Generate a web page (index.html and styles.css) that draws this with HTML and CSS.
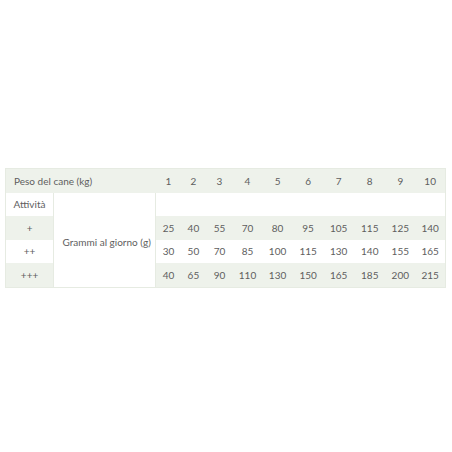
FILE: index.html
```html
<!DOCTYPE html>
<html lang="it">
<head>
<meta charset="utf-8">
<link rel="stylesheet" href="styles.css">
</head>
<body>
<div class="page">
<table class="dose">
<colgroup>
<col class="c-act"><col class="c-lbl">
<col class="n25"><col class="n25"><col class="n27"><col class="n29"><col class="n31">
<col class="n30"><col class="n31"><col class="n31"><col class="n30"><col class="n30">
</colgroup>
<tr class="head">
<td colspan="2" class="left">Peso del cane (kg)</td>
<td>1</td><td>2</td><td>3</td><td>4</td><td>5</td><td>6</td><td>7</td><td>8</td><td>9</td><td>10</td>
</tr>
<tr class="plain">
<td class="act">Attività</td>
<td rowspan="4" class="lbl">Grammi al giorno (g)</td>
<td></td><td></td><td></td><td></td><td></td><td></td><td></td><td></td><td></td><td></td>
</tr>
<tr class="tint">
<td class="act">+</td>
<td>25</td><td>40</td><td>55</td><td>70</td><td>80</td><td>95</td><td>105</td><td>115</td><td>125</td><td>140</td>
</tr>
<tr class="plain">
<td class="act">++</td>
<td>30</td><td>50</td><td>70</td><td>85</td><td>100</td><td>115</td><td>130</td><td>140</td><td>155</td><td>165</td>
</tr>
<tr class="tint">
<td class="act">+++</td>
<td>40</td><td>65</td><td>90</td><td>110</td><td>130</td><td>150</td><td>165</td><td>185</td><td>200</td><td>215</td>
</tr>
</table>
</div>
</body>
</html>
```

FILE: styles.css
```css
html, body {
  margin: 0;
  padding: 0;
  background: #ffffff;
}
.page {
  padding: 168px 6px 0 5px;
  font-family: Lato, "Open Sans", sans-serif;
  font-size: 10px;
  color: #5e5e5e;
}
.dose {
  border-collapse: collapse;
  table-layout: fixed;
  width: 441px;
  border: 1px solid #e6ebe2;
}
.dose td {
  border: 0;
  text-align: center;
  vertical-align: middle;
  padding: 0;
  height: 23.5px;
  line-height: 14px;
}
.dose td.left {
  text-align: left;
  padding-left: 8px;
}
.dose td.act {
  border-right: 1px solid #e6ebe2;
}
.dose td.lbl {
  background: #ffffff;
  border-right: 1px solid #e6ebe2;
  padding: 4px 0 0 4px;
}
.dose tr.head td,
.dose tr.tint td {
  background: #eef2eb;
}
.dose tr.tint td.lbl,
.dose tr.plain td {
  background: #ffffff;
}
.c-act { width: 48px; }
.c-lbl { width: 102px; }
.n25 { width: 25px; }
.n27 { width: 27px; }
.n29 { width: 29px; }
.n30 { width: 30px; }
.n31 { width: 31px; }
```
